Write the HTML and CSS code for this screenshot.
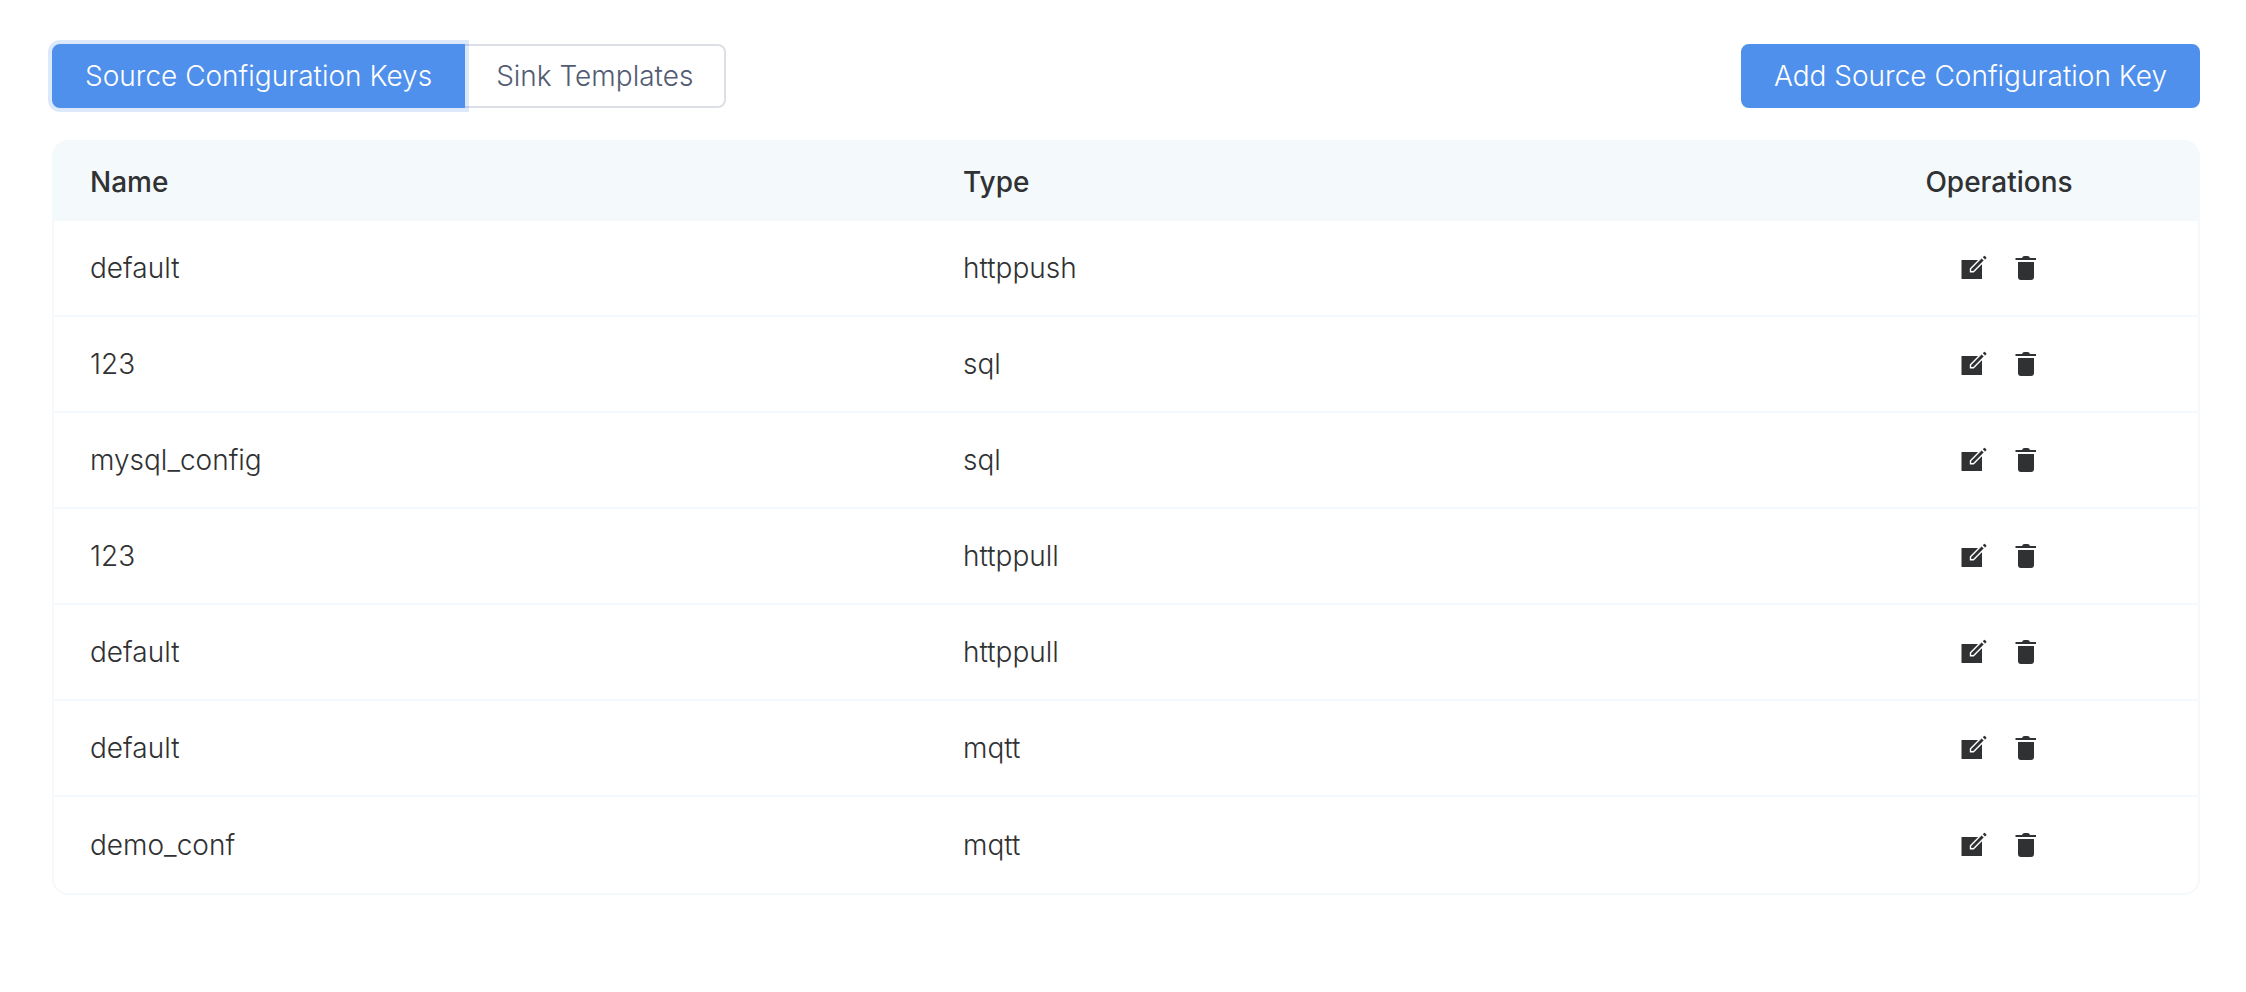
FILE: index.html
```
<!DOCTYPE html>
<html lang="en">
<head>
<meta charset="utf-8">
<title>Configuration</title>
<link rel="stylesheet" href="styles.css">
</head>
<body>
<svg class="sprite" aria-hidden="true">
  <symbol id="icon-edit" viewBox="-1 0 28 28">
    <path fill="#303133" d="M1.500 6h16l4.500 4v15H1.500z"/>
    <path fill="#fff" d="M20.500 3.500L25.500 8L22 12V6H18z"/>
    <path fill="#303133" stroke="#fff" stroke-width="1.400" d="M10.500 14.700L21.600 3.600L24.600 6.600L13.500 17.700H10.500z"/>
    <path fill="#303133" d="M22.800 3.200L24 2Q24.600 1.600 25.200 2.200L26.200 3.200Q26.700 3.800 26.200 4.400L25 5.400z"/>
  </symbol>
  <symbol id="icon-trash" viewBox="-1 0 28 28">
    <path fill="#303133" d="M3.500 4h6.500q.5-2 2.500-2h3q2 0 2.500 2h6v2H3.500z"/>
    <path fill="#303133" d="M6 8h16v15q0 3-3 3H9q-3 0-3-3z"/>
  </symbol>
</svg>
<main class="page">
  <header class="toolbar">
    <div class="tabs">
      <button class="button button-primary tab-first" type="button">Source Configuration Keys</button>
      <button class="button tab-last" type="button">Sink Templates</button>
    </div>
    <button class="button button-primary" type="button">Add Source Configuration Key</button>
  </header>
  <div class="card">
    <table class="keys">
      <colgroup><col><col><col class="col-operations"></colgroup>
      <thead>
        <tr><th scope="col">Name</th><th scope="col">Type</th><th scope="col" class="operations">Operations</th></tr>
      </thead>
      <tbody>
        <tr><td>default</td><td>httppush</td><td><div class="actions"><button type="button" class="action" aria-label="Edit"><svg><use href="#icon-edit"/></svg></button><button type="button" class="action" aria-label="Delete"><svg><use href="#icon-trash"/></svg></button></div></td></tr>
        <tr><td>123</td><td>sql</td><td><div class="actions"><button type="button" class="action" aria-label="Edit"><svg><use href="#icon-edit"/></svg></button><button type="button" class="action" aria-label="Delete"><svg><use href="#icon-trash"/></svg></button></div></td></tr>
        <tr><td>mysql_config</td><td>sql</td><td><div class="actions"><button type="button" class="action" aria-label="Edit"><svg><use href="#icon-edit"/></svg></button><button type="button" class="action" aria-label="Delete"><svg><use href="#icon-trash"/></svg></button></div></td></tr>
        <tr><td>123</td><td>httppull</td><td><div class="actions"><button type="button" class="action" aria-label="Edit"><svg><use href="#icon-edit"/></svg></button><button type="button" class="action" aria-label="Delete"><svg><use href="#icon-trash"/></svg></button></div></td></tr>
        <tr><td>default</td><td>httppull</td><td><div class="actions"><button type="button" class="action" aria-label="Edit"><svg><use href="#icon-edit"/></svg></button><button type="button" class="action" aria-label="Delete"><svg><use href="#icon-trash"/></svg></button></div></td></tr>
        <tr><td>default</td><td>mqtt</td><td><div class="actions"><button type="button" class="action" aria-label="Edit"><svg><use href="#icon-edit"/></svg></button><button type="button" class="action" aria-label="Delete"><svg><use href="#icon-trash"/></svg></button></div></td></tr>
        <tr><td>demo_conf</td><td>mqtt</td><td><div class="actions"><button type="button" class="action" aria-label="Edit"><svg><use href="#icon-edit"/></svg></button><button type="button" class="action" aria-label="Delete"><svg><use href="#icon-trash"/></svg></button></div></td></tr>
      </tbody>
    </table>
  </div>
</main>
</body>
</html>
```
FILE: styles.css
```
* {
  box-sizing: border-box;
}

body {
  margin: 0;
  background: #fff;
  color: #303133;
  font: 350 28px/36px Inter, "Liberation Sans", sans-serif;
}

.sprite {
  display: none;
}

.page {
  padding: 44px 46px 44px 52px;
}

.toolbar {
  display: flex;
  justify-content: space-between;
  margin-bottom: 32px;
}

.tabs {
  display: flex;
}

.button {
  padding: 12px 31px;
  border: 2px solid #dcdfe6;
  border-radius: 8px;
  background: #fff;
  color: #535b73;
  font: inherit;
}

.button-primary {
  border-color: #4f90ec;
  background: #4f90ec;
  color: #fff;
}

.tab-first {
  border-radius: 8px 0 0 8px;
  box-shadow: 0 0 0 4px rgba(79, 144, 236, 0.2);
  z-index: 1;
}

.tab-last {
  border-left: 0;
  border-radius: 0 8px 8px 0;
}

.card {
  overflow: hidden;
  border: 2px solid #f4f9fc;
  border-radius: 16px;
}

.keys {
  width: 100%;
  table-layout: fixed;
  border-collapse: separate;
  border-spacing: 0;
}

.col-operations {
  width: 398px;
}

.keys th {
  height: 79px;
  padding: 0 36px;
  background: #f4f9fc;
  font-weight: 550;
  text-align: left;
}

.keys .operations {
  text-align: center;
}

.keys td {
  height: 96px;
  padding: 0 36px;
  border-bottom: 2px solid #f4f9fc;
}

.keys tr:last-child td {
  border-bottom: 0;
}

.actions {
  display: flex;
  justify-content: center;
  gap: 24px;
}

.action {
  width: 28px;
  height: 28px;
  padding: 0;
  border: 0;
  background: none;
}

.action svg {
  display: block;
  width: 100%;
  height: 100%;
}
```
